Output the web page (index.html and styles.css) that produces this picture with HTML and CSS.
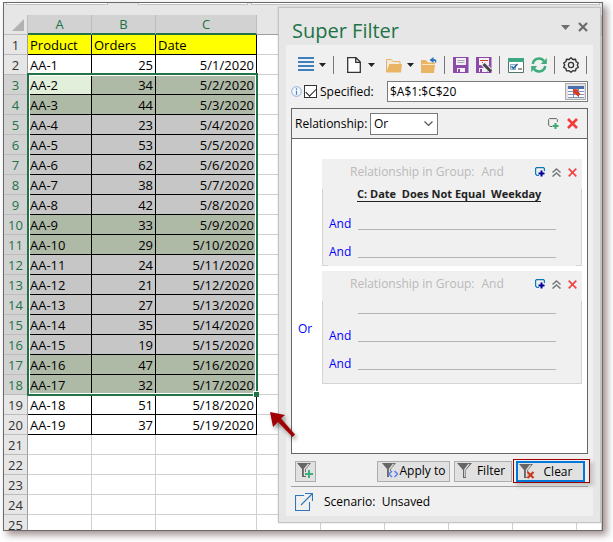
FILE: index.html
```html
<!DOCTYPE html>
<html lang="en">
<head>
<meta charset="utf-8">
<title>Super Filter</title>
<link rel="stylesheet" href="styles.css">
</head>
<body>
<main class="window">
  <div class="formula-strip"><span class="name-box"></span><span class="fx-box"></span><span class="formula-box"></span></div>
  <div class="sheet">
    <table class="grid">
      <colgroup><col class="col-num"><col class="col-cell"><col class="col-cell"><col class="col-date"><col class="col-cell"><col class="col-cell"><col class="col-cell"><col class="col-cell"><col class="col-cell"><col></colgroup>
      <thead>
        <tr>
          <td class="corner"><svg width="12" height="12" viewBox="0 0 12 12"><path d="M12 0v12H0z" fill="#b2b2b2"/></svg></td>
          <th class="on">A</th><th class="on">B</th><th class="on">C</th><th></th><th></th><th></th><th></th><th></th><th></th>
        </tr>
      </thead>
      <tbody id="rows"></tbody>
    </table>
    <div class="selection"><i class="handle"></i></div>
  </div>

  <svg class="pointer" width="30" height="30" viewBox="0 0 30 30"><path d="M1 1l15 3-4 3.500L26 23.500 23.500 26 9 11l-5 5z" fill="#a00004"/></svg>

  <aside class="panel">
    <header class="title-row">
      <h1>Super Filter</h1>
      <button class="plain" aria-label="Pane options"><svg width="9" height="5" viewBox="0 0 9 5"><path d="M0 0h9L4.500 5z" fill="#6e6e6e"/></svg></button>
      <button class="plain" aria-label="Close"><svg width="10" height="10" viewBox="0 0 10 10"><path d="M1 1l8 8M9 1L1 9" stroke="#6b6b6b" stroke-width="2.200"/></svg></button>
    </header>

    <div class="body">
      <div class="toolbar">
        <button class="plain" aria-label="Saved scenarios">
          <svg width="16" height="16" viewBox="0 0 16 16"><path d="M0 1h16M0 5h16M0 9h16M0 13h16" stroke="#3f7fbd" stroke-width="2"/></svg>
          <svg class="caret" width="7" height="4" viewBox="0 0 7 4"><path d="M0 0h7L3.500 4z"/></svg>
        </button>
        <i class="sep"></i>
        <button class="plain new" aria-label="New">
          <svg width="16" height="16" viewBox="0 0 16 16"><path d="M.7.700h8.300l4.300 4.300v10.300H.7zM8.700.700v4.600h4.600" fill="#fff" stroke="#333" stroke-width="1.300"/></svg>
          <svg class="caret" width="7" height="4" viewBox="0 0 7 4"><path d="M0 0h7L3.500 4z"/></svg>
        </button>
        <button class="plain" aria-label="Open">
          <svg width="16" height="16" viewBox="0 0 16 16"><path d="M.5 15V2.500h5l1.500 2h7V7" fill="#f4eadb" stroke="#e8b567"/><path d="M0 15.500L3.500 7H16l-1 8.500z" fill="#e9b565"/></svg>
          <svg class="caret" width="7" height="4" viewBox="0 0 7 4"><path d="M0 0h7L3.500 4z"/></svg>
        </button>
        <button class="plain" aria-label="Revert">
          <svg width="16" height="16" viewBox="0 0 16 16"><path d="M0 3h5l2 2.500h7V8l-1 8H0z" fill="#e9b565"/><path d="M1 7.500h13" stroke="#f8e6c8"/><path d="M12.500 0L8.500 3l4 3V4c1.500 0 2 .6 2 2.200C16.500 4 15 2 12.500 2z" fill="#2b70b8"/></svg>
        </button>
        <i class="sep"></i>
        <button class="plain" aria-label="Save">
          <svg width="16" height="16" viewBox="0 0 16 16"><path d="M0 0h15.500v16H0z" fill="#8c4bab"/><path d="M3 1h10v7H3zM4 11h8v4H4z" fill="#f4eef7"/><path d="M4.500 3.500h7M4.500 5.500h7" stroke="#aaa"/><path d="M5 12h2v3H5z" fill="#8c4bab"/></svg>
        </button>
        <button class="plain" aria-label="Save as">
          <svg width="16" height="16" viewBox="0 0 16 16"><path d="M0 0h15.500v16H0z" fill="#8c4bab"/><path d="M3 1h10v7H3zM3 11h8v4H3z" fill="#f4eef7"/><path d="M4 3.500h8M6 5l3 3" stroke="#c8442e"/><path d="M4 12h2v3H4z" fill="#8c4bab"/><path d="M7 6.500l7 7" stroke="#f4eef7" stroke-width="5"/><path d="M7.500 7l7.500 7.500" stroke="#444" stroke-width="3"/></svg>
        </button>
        <i class="sep"></i>
        <button class="plain" aria-label="View settings">
          <svg width="16" height="16" viewBox="0 0 16 16"><path d="M.5 2.500h15v13H.5z" fill="#fff" stroke="#54746d"/><path d="M0 1h16v4H0z" fill="#3fa882"/><path d="M2.500 7.500h5v5h-5z" fill="#dce9f5" stroke="#8fa9c2"/><path d="M3.500 9.500l2 2L9.500 7" fill="none" stroke="#1c5fa8" stroke-width="1.500"/><path d="M10 12h4" stroke="#333"/></svg>
        </button>
        <button class="plain" aria-label="Refresh">
          <svg width="16" height="16" viewBox="0 0 16 16"><path d="M1.800 7A6.200 6.200 0 0 1 13 4.200M14.200 9A6.200 6.200 0 0 1 3 11.800" fill="none" stroke="#3fac7b" stroke-width="2.400"/><path d="M15.800 1v6H9.800zM.2 15V9h6z" fill="#3fac7b"/></svg>
        </button>
        <i class="sep"></i>
        <button class="plain" aria-label="Settings">
          <svg width="16" height="16" viewBox="0 0 16 16"><g fill="none" stroke="#333"><path stroke-width="1.400" stroke-linejoin="round" d="M8 .8l1.900 1.700 2.600-.3.600 2.500 2.200 1.300-1 2 1 2.300-2.200 1.200-.6 2.400-2.600-.2L8 15.300l-1.900-1.600-2.600.2-.6-2.400L.7 10.300l1-2.300-1-2 2.200-1.300.6-2.500 2.600.3z"/><circle cx="8" cy="8" r="2.600" stroke-width="1.300"/></g></svg>
        </button>
        <i class="sep"></i>
      </div>

      <div class="range-row">
        <svg width="11" height="11" viewBox="0 0 11 11"><circle cx="5.500" cy="5.500" r="4.800" fill="#f5f8fc" stroke="#8eacd8"/><path d="M5.500 2.300v1.400M5.500 4.700v4" stroke="#5580c0" stroke-width="1.200"/></svg>
        <input type="checkbox" id="specified" checked>
        <label for="specified">Specified:</label>
        <div class="range-field">
          <input type="text" aria-label="Range" value="$A$1:$C$20">
          <button class="pick" aria-label="Select range"><svg width="16" height="12" viewBox="0 0 16 12"><path d="M0 0h16v12H0z" fill="#fff"/><path d="M0 0h16v3H0z" fill="#496fae"/><path d="M0 5.500h16M0 8.500h16M0 11.500h16M5.500 3v9M10.500 3v9" stroke="#8195bd"/><path d="M5 3l6 .5-1.500 1.500L12.500 8 10 10.500l-3-3L5.500 9z" fill="#d33a1e"/></svg></button>
        </div>
      </div>

      <div class="relation-row">
        <label for="relation">Relationship:</label>
        <div class="select-wrap">
          <select id="relation"><option>Or</option><option>And</option></select>
          <svg width="9" height="6" viewBox="0 0 9 6"><path d="M.5.500l4 4 4-4" fill="none" stroke="#555" stroke-width="1.200"/></svg>
        </div>
        <button class="plain add" aria-label="Add group"><svg width="11" height="11" viewBox="0 0 11 11"><path d="M4 8.500H2L.6 7V1.500L1.500.6h7l.9.900V4" fill="none" stroke="#666"/><path d="M7.500 5v6M4.500 8h6" stroke="#3fa86f" stroke-width="2"/></svg></button>
        <button class="plain" aria-label="Remove all"><svg width="11" height="11" viewBox="0 0 11 11"><path d="M1 1l9 9M10 1l-9 9" stroke="#f23b3b" stroke-width="2.600"/></svg></button>
      </div>

      <div class="conditions">
        <section class="group corners">
          <header class="group-head">
            <span>Relationship in Group:</span><span class="mode">And</span>
            <button class="plain" aria-label="Add condition"><svg width="10" height="10" viewBox="0 0 10 10"><path d="M4 8.500H2L.6 7V1.500L1.500.6h7l.9.900V4" fill="none" stroke="#0878b8" stroke-width="1.200"/><path d="M6.500 3.500v6M3.500 6.500h6" stroke="#00009c" stroke-width="2"/></svg></button>
            <button class="plain" aria-label="Collapse"><svg width="9" height="9" viewBox="0 0 9 9"><path d="M.5 4.500l4-3.500 4 3.500M.5 8.500l4-3.500 4 3.500" fill="none" stroke="#777" stroke-width="1.500"/></svg></button>
            <button class="plain" aria-label="Remove group"><svg width="9" height="9" viewBox="0 0 9 9"><path d="M.7.700l7.600 7.600M8.300.700L.7 8.300" stroke="#ee4545" stroke-width="1.700"/></svg></button>
          </header>
          <div class="slot first"><a class="condition" href="#">C: Date&nbsp; Does Not Equal&nbsp; Weekday</a></div>
          <div class="slot"><span>And</span><i></i></div>
          <div class="slot"><span>And</span><i></i></div>
        </section>
        <div class="joiner">Or</div>
        <section class="group framed">
          <header class="group-head">
            <span>Relationship in Group:</span><span class="mode">And</span>
            <button class="plain" aria-label="Add condition"><svg width="10" height="10" viewBox="0 0 10 10"><path d="M4 8.500H2L.6 7V1.500L1.500.6h7l.9.900V4" fill="none" stroke="#0878b8" stroke-width="1.200"/><path d="M6.500 3.500v6M3.500 6.500h6" stroke="#00009c" stroke-width="2"/></svg></button>
            <button class="plain" aria-label="Collapse"><svg width="9" height="9" viewBox="0 0 9 9"><path d="M.5 4.500l4-3.500 4 3.500M.5 8.500l4-3.500 4 3.500" fill="none" stroke="#777" stroke-width="1.500"/></svg></button>
            <button class="plain" aria-label="Remove group"><svg width="9" height="9" viewBox="0 0 9 9"><path d="M.7.700l7.600 7.600M8.300.700L.7 8.300" stroke="#ee4545" stroke-width="1.700"/></svg></button>
          </header>
          <div class="slot first"><span></span><i></i></div>
          <div class="slot"><span>And</span><i></i></div>
          <div class="slot"><span>And</span><i></i></div>
        </section>
      </div>

      <div class="actions">
        <button class="btn icon-only" aria-label="New filter"><svg width="16" height="16" viewBox="0 0 16 16"><path d="M0 0h14L9 6v8H5V6z" fill="#666"/><path d="M11.500 1L7.500 6v7" fill="none" stroke="#ddd" stroke-width="1.300"/><path d="M12 7v8M8 11h8" stroke="#e1e1e1" stroke-width="4"/><path d="M12 7v8M8 11h8" stroke="#3fae7c" stroke-width="2"/></svg></button>
        <button class="btn apply"><svg width="16" height="16" viewBox="0 0 16 16"><path d="M0 0h14L9 6v8H5V6z" fill="#666"/><path d="M11.500 1L7.500 6v7" fill="none" stroke="#ddd" stroke-width="1.300"/><path d="M7 8h9v7H7z" fill="#e1e1e1"/><path d="M10 8l-3 3 3 3M12.500 8l3 3-3 3" fill="none" stroke="#5b84ee" stroke-width="1.600"/></svg><span>Apply to</span></button>
        <button class="btn filter"><svg width="16" height="16" viewBox="0 0 16 16"><path d="M0 0h15L9 7v8H6V7z" fill="#666"/><path d="M12 1L7.800 6.500V14" fill="none" stroke="#ddd" stroke-width="1.300"/></svg><span>Filter</span></button>
        <div class="callout"><button class="btn clear"><svg width="16" height="16" viewBox="0 0 16 16"><path d="M0 0h14L9 6v8H5V6z" fill="#666"/><path d="M11.500 1L7.500 6v7" fill="none" stroke="#ddd" stroke-width="1.300"/><path d="M8.500 8l6 6M14.500 8l-6 6" stroke="#e1e1e1" stroke-width="4"/><path d="M8.500 8l6 6M14.500 8l-6 6" stroke="#c9391c" stroke-width="2.200"/></svg><span>Clear</span></button></div>
      </div>

      <footer class="scenario">
        <svg width="18" height="18" viewBox="0 0 18 18"><path d="M9 2.500H.5v15h14V9M6 12L17 1M10 .5h7.500V8" fill="none" stroke="#2f76b8" stroke-width="1.100"/></svg>
        <span>Scenario:&nbsp; Unsaved</span>
      </footer>
    </div>
  </aside>
</main>
<script src="sheet.js"></script>
</body>
</html>
```
FILE: styles.css
```css
* { box-sizing: border-box; }
body {
  margin: 0;
  background: #fff;
  color: #000;
  font: 12px/16px "Open Sans", "Noto Sans", sans-serif;
}
button, input, select { font: inherit; color: inherit; }
svg { display: block; flex: none; }

.window {
  position: relative;
  display: flex;
  flex-direction: column;
  height: calc(100vh - 13px);
  margin: 2px 10px 11px 3px;
  border: 1px solid #6a6a6a;
  background: #fff;
  box-shadow: 4px 4px 7px rgba(70, 40, 40, .5);
}

/* Worksheet */
.formula-strip {
  display: flex;
  flex: none;
  height: 12px;
  padding: 0 2px;
  background: #e6e6e6;
}
.formula-strip span {
  height: 2px;
  border: 1px solid #c4c4c4;
  border-top: 0;
  background: #fff;
}
.name-box { width: 102px; }
.fx-box { width: 110px; margin: 0 3px 0 30px; }
.formula-box { flex: 1; }
.sheet {
  position: relative;
  flex: 1;
  min-height: 0;
  overflow: hidden;
}
.grid {
  width: 100%;
  table-layout: fixed;
  border-spacing: 0;
  font-size: 13px;
  line-height: 18px;
}
.col-num { width: 24px; }
.col-cell { width: 64px; }
.col-date { width: 101px; }
.grid td, .grid th {
  height: 20px;
  padding: 1px 2px 0;
  border: 0 solid #d0d0d0;
  border-width: 0 1px 1px 0;
  font-weight: normal;
  text-align: right;
  white-space: nowrap;
}
.grid thead th {
  padding: 0;
  border-color: #bdbdbd #bdbdbd #9f9f9f;
  background: #e6e6e6;
  text-align: center;
}
.grid thead th.on {
  border-bottom: 2px solid #217346;
  background: #d2d2d2;
  color: #217346;
}
.grid .corner { padding: 0 3px 0 0; background: #e6e6e6; border-color: #bdbdbd; }
.corner svg { margin-left: auto; }
.grid tbody th {
  border-color: #bdbdbd;
  border-right-color: #9f9f9f;
  background: #e6e6e6;
  text-align: center;
  color: #333;
}
.grid tbody .on th { background: #d2d2d2; color: #217346; }
.grid td.data { border-color: #000; }
.grid td.name { text-align: left; }
.grid .head td.data { background: #ff0; text-align: left; }
.grid .on td.data { background: #c6c6c6; }
.grid .match td.data { background: #aeb9a6; }
.grid .active td.name { background: #e2efda; }
.selection {
  position: absolute;
  left: 23px;
  top: 58px;
  width: 231px;
  height: 323px;
  border: 2px solid #217346;
  box-shadow: inset 0 0 0 1px #fff;
}
.handle {
  position: absolute;
  right: -3px;
  bottom: -3px;
  width: 6px;
  height: 6px;
  border: solid #fff;
  border-width: 1px 0 0 1px;
  background: #217346;
}
.pointer {
  position: absolute;
  z-index: 1;
  left: 265px;
  top: 408px;
  filter: drop-shadow(2px 3px 2px rgba(0, 0, 0, .4));
}

/* Task pane */
.panel {
  position: absolute;
  top: 4px;
  right: 1px;
  bottom: 7px;
  display: flex;
  flex-direction: column;
  width: 323px;
  padding: 0 7px 6px;
  border: 1px solid #c3c3c3;
  background: #e6e6e6;
  box-shadow: 0 0 2px rgba(0, 0, 0, .15);
}
.plain {
  display: flex;
  align-items: center;
  gap: 5px;
  padding: 0;
  border: 0;
  background: none;
}
.title-row {
  display: flex;
  align-items: center;
  flex: none;
  gap: 8px;
  height: 37px;
  padding: 0 5px 0 6px;
}
.title-row .plain { height: 28px; align-self: flex-start; padding-top: 10px; }
h1 {
  flex: 1;
  margin: 8px 0 0;
  color: #217346;
  font-size: 20px;
  font-weight: normal;
  line-height: 28px;
}
.body {
  display: flex;
  flex-direction: column;
  flex: 1;
  padding: 7px 5px 0;
  background: #f0f0f0;
}
.toolbar {
  display: flex;
  align-items: center;
  gap: 7px;
  height: 26px;
  padding-left: 7px;
}
.toolbar .new { padding: 0 4px 0 5px; }
.toolbar .caret { fill: #222; }
.sep { width: 1px; height: 18px; background: #777; margin-right: 1px; }
.sep:last-child { margin: 0; }
.range-row {
  display: flex;
  align-items: center;
  height: 21px;
  margin: 3px 0 6px;
}
.range-row input[type="checkbox"] {
  appearance: none;
  width: 13px;
  height: 13px;
  margin: 0 3px 0 2px;
  border: 1px solid #333;
  background: #fff;
}
.range-row input[type="checkbox"]:checked::after {
  content: "";
  display: block;
  width: 9px;
  height: 5px;
  margin: 2px 1px;
  border: solid #222;
  border-width: 0 0 1px 1px;
  transform: rotate(-45deg);
}
.range-row label { flex: 1; }
.range-field {
  display: flex;
  align-items: center;
  width: 201px;
  height: 21px;
  padding-right: 1px;
  border: 1px solid #7a7a7a;
  background: #fff;
}
.range-field input {
  flex: 1;
  min-width: 0;
  padding: 0 2px;
  border: 0;
  background: none;
}
.pick {
  display: flex;
  align-items: center;
  justify-content: center;
  width: 21px;
  height: 17px;
  padding: 0;
  border: 1px solid #adadad;
  background: #e1e1e1;
}
.relation-row {
  display: flex;
  align-items: center;
  gap: 7px;
  height: 30px;
  padding: 0 9px 0 3px;
  border: 1px solid #666;
  border-bottom: 0;
}
.relation-row label { width: 68px; white-space: nowrap; }
.select-wrap { position: relative; }
.select-wrap svg { position: absolute; right: 5px; top: 8px; pointer-events: none; }
select {
  appearance: none;
  display: block;
  width: 68px;
  height: 22px;
  padding: 0 3px;
  border: 1px solid #7a7a7a;
  border-radius: 0;
  background: #fff;
}
.relation-row .add { margin-left: auto; }
.relation-row { column-gap: 8px; }
.relation-row .select-wrap { margin-left: -1px; }
.conditions {
  display: grid;
  grid-template-columns: 30px 1fr;
  align-content: start;
  row-gap: 5px;
  flex: 1;
  padding: 20px 5px 0 0;
  border: 1px solid #666;
  background: #fff;
}
.group { grid-column: 2; background: #f0f0f0; }
.joiner { align-self: center; padding: 3px 0 0 6px; color: #00f; }
.corners {
  padding-bottom: 8px;
  background:
    linear-gradient(#d4d4d4, #d4d4d4) 0 100% / 1px 77px no-repeat,
    linear-gradient(#d4d4d4, #d4d4d4) 100% 100% / 1px 77px no-repeat,
    linear-gradient(#d4d4d4, #d4d4d4) 0 100% / 6px 1px no-repeat,
    linear-gradient(#d4d4d4, #d4d4d4) 100% 100% / 6px 1px no-repeat,
    #f0f0f0;
}
.framed {
  padding-bottom: 14px;
  background:
    linear-gradient(#d4d4d4, #d4d4d4) 0 100% / 1px 83px no-repeat,
    linear-gradient(#d4d4d4, #d4d4d4) 100% 100% / 1px 83px no-repeat,
    linear-gradient(#d4d4d4, #d4d4d4) 0 100% / 100% 1px no-repeat,
    #f0f0f0;
}
.group-head {
  display: flex;
  align-items: center;
  gap: 7px;
  height: 26px;
  padding: 0 5px 0 28px;
  color: #b9b9b9;
}
.mode { flex: 1; }
.slot {
  display: flex;
  align-items: flex-end;
  height: 28px;
  padding: 0 26px 0 7px;
  color: #00f;
}
.slot.first { height: 17px; }
.slot span { width: 29px; line-height: 12px; }
.slot i { flex: 1; height: 1px; background: #b5b5b5; }
.condition {
  margin-left: 28px;
  border-bottom: 1px solid #222;
  color: #222;
  font-size: 11px;
  font-weight: bold;
  line-height: 14px;
  text-decoration: none;
  white-space: nowrap;
}
.actions {
  display: flex;
  align-items: center;
  gap: 4px;
  margin: 5px -2px 3px 4px;
}
.btn {
  display: flex;
  align-items: center;
  height: 21px;
  padding: 0 4px;
  border: 1px solid #adadad;
  background: #e1e1e1;
  white-space: nowrap;
}
.btn span { flex: 1; text-align: center; }
.icon-only { width: 21px; padding: 0 1px; margin-right: auto; }
.apply { width: 73px; padding: 0 2px 0 4px; }
.filter { width: 58px; padding: 0 2px; }
.callout {
  margin-left: -3px;
  padding: 1px 4px 0 2px;
  border: 1px solid #a00004;
  box-shadow: 3px 3px 4px rgba(0, 0, 0, .2);
}
.clear { width: 69px; padding: 0 2px 0 1px; border: 2px solid #0078d7; }
.scenario {
  display: flex;
  align-items: center;
  gap: 11px;
  height: 31px;
  padding-left: 4px;
  margin-bottom: -1px;
  border-top: 1px solid #a0a0a0;
}
```
FILE: sheet.js
```js
const orders = [25, 34, 44, 23, 53, 62, 38, 42, 33, 29, 24, 21, 27, 35, 19, 47, 32, 51, 37];
const matches = [3, 4, 10, 11, 17, 18];
const body = document.getElementById("rows");

for (let n = 1; n <= 25; n++) {
  const row = body.insertRow();
  row.classList.toggle("head", n === 1);
  row.classList.toggle("on", n >= 3 && n <= 18);
  row.classList.toggle("match", matches.includes(n));
  row.classList.toggle("active", n === 3);

  const label = document.createElement("th");
  label.scope = "row";
  label.textContent = n;
  row.append(label);

  let values = ["", "", ""];
  if (n === 1) values = ["Product", "Orders", "Date"];
  else if (n <= 20) values = ["AA-" + (n - 1), orders[n - 2], "5/" + (n - 1) + "/2020"];

  values.concat(["", "", "", "", "", ""]).forEach((value, i) => {
    const cell = row.insertCell();
    cell.textContent = value;
    if (i < 3 && n <= 20) cell.classList.add("data");
    if (i === 0) cell.classList.add("name");
  });
}
```
